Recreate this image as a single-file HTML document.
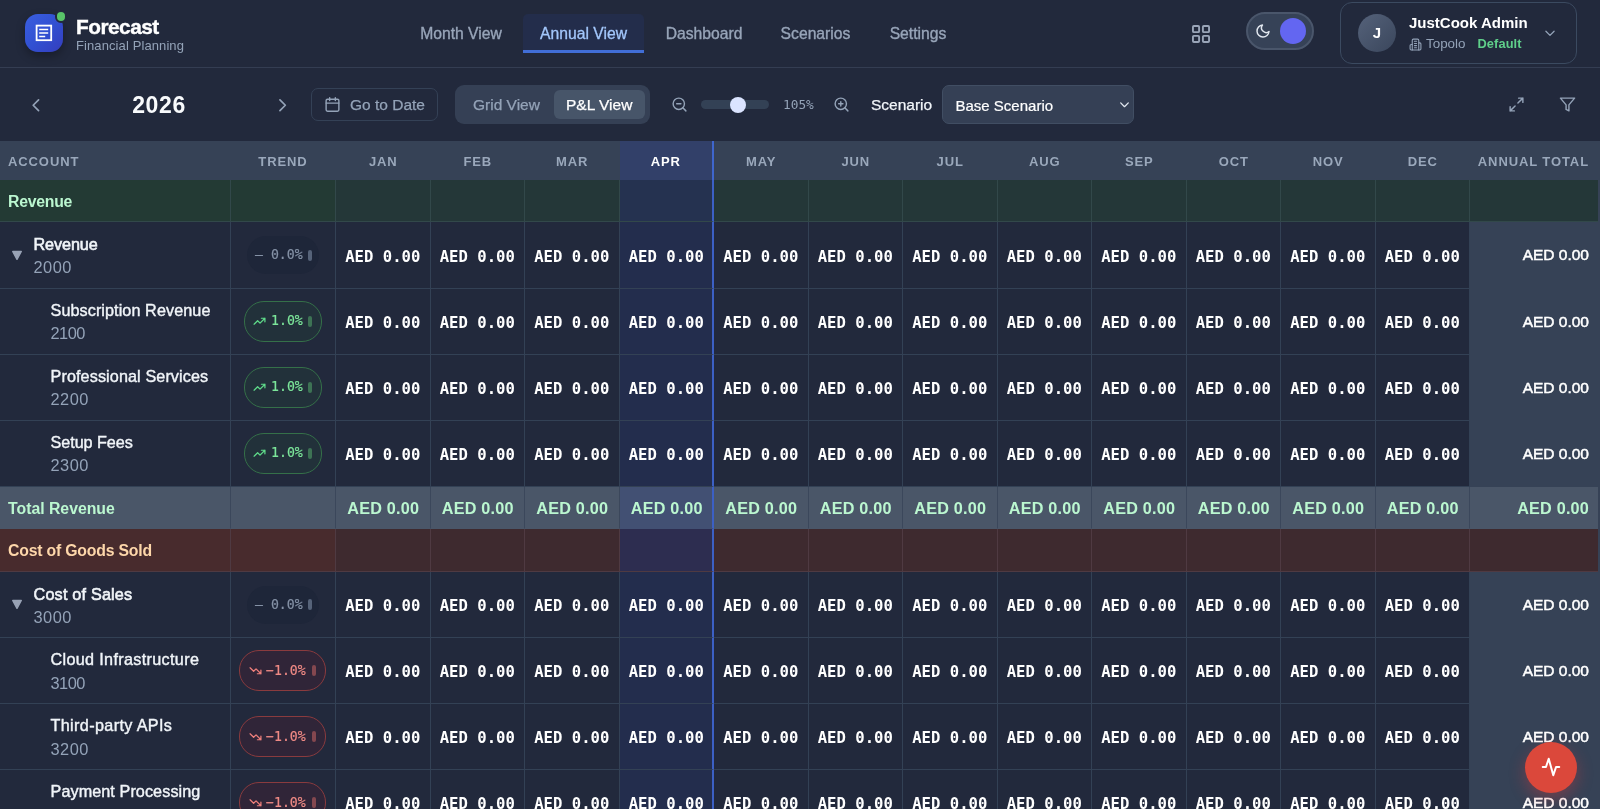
<!DOCTYPE html><html lang="en"><head><meta charset="utf-8"><title>Forecast - Annual View</title><style>
*{box-sizing:border-box;margin:0;padding:0}
html,body{width:1600px;height:809px;overflow:hidden;background:#22293c}
body{font-family:"Liberation Sans",sans-serif;color:#f1f5f9;position:relative}
#app{position:absolute;left:0;top:0;width:1600px;height:809px;overflow:hidden;will-change:transform}
.abs{position:absolute}
.hdr{position:absolute;left:0;top:0;width:1600px;height:68px;background:#22293c;border-bottom:1px solid #343d52}
.logo{position:absolute;left:25px;top:14px;width:38px;height:38px;border-radius:13px;background:linear-gradient(135deg,#3a5fe0 0%,#3150d2 50%,#353dbd 100%);box-shadow:0 4px 10px rgba(0,0,0,.3)}
.dot{position:absolute;left:54.5px;top:10px;width:12.5px;height:12.5px;border-radius:50%;background:#58c468;border:2px solid #22293c}
.brand{position:absolute;left:76px;top:15px;font-size:20.8px;font-weight:700;letter-spacing:-.5px;-webkit-text-stroke:.4px #fff;color:#fff;line-height:24px}
.sub{position:absolute;left:76px;top:38px;font-size:13px;color:#94a3b8;line-height:16px;letter-spacing:.1px}
.nav{position:absolute;top:14px;height:38px;line-height:40px;font-size:15.7px;color:#98a5b9;-webkit-text-stroke:.35px #98a5b9;text-align:center;white-space:nowrap}
.nav.act{color:#a3c7fb;-webkit-text-stroke:.3px #a3c7fb;background:#232d4b;border-bottom:3px solid #416ed7;border-radius:5px 5px 0 0;height:39px}
.tog{position:absolute;left:1246px;top:12px;width:68px;height:38px;border-radius:19px;background:#364257;border:2px solid #4a566b}
.knob{position:absolute;left:1280px;top:18px;width:26px;height:26px;border-radius:50%;background:#6366f1}
.user{position:absolute;left:1340px;top:2px;width:237px;height:62px;border-radius:12px;border:1px solid #3b4a60;background:#22293c}
.av{position:absolute;left:1358px;top:14px;width:38px;height:38px;border-radius:50%;background:linear-gradient(135deg,#55627a,#3a465c);color:#fff;font-weight:700;font-size:15px;text-align:center;line-height:38px}
.uname{position:absolute;left:1409px;top:14px;font-size:15px;font-weight:700;color:#fff;line-height:18px;white-space:nowrap}
.uorg{position:absolute;left:1426px;top:36px;font-size:13.4px;color:#94a3b8;line-height:16px}
.udef{position:absolute;left:1477.5px;top:36px;font-size:12.8px;letter-spacing:.1px;color:#5fcf8a;line-height:16px;font-weight:700}
.tb{position:absolute;left:0;top:69px;width:1600px;height:72px;background:#22293c}
.year{position:absolute;left:109px;top:90px;width:100px;text-align:center;font-size:23px;letter-spacing:.6px;font-weight:700;color:#f8fafc;line-height:30px}
.gobtn{position:absolute;left:311px;top:88px;width:127px;height:33px;border:1px solid #344156;border-radius:7px}
.gotxt{position:absolute;left:350px;top:95px;font-size:15.5px;-webkit-text-stroke:.25px #94a3b8;color:#94a3b8;line-height:20px;white-space:nowrap}
.seg{position:absolute;left:455px;top:85px;width:195px;height:39px;border-radius:9px;background:#354055}
.segact{position:absolute;left:554px;top:90px;width:91px;height:29px;border-radius:6px;background:#475569}
.seg1{position:absolute;left:473px;top:95px;font-size:15.5px;-webkit-text-stroke:.25px #94a3b8;color:#94a3b8;line-height:20px;white-space:nowrap}
.seg2{position:absolute;left:566px;top:95px;font-size:15.5px;-webkit-text-stroke:.25px #fff;color:#fff;line-height:20px;white-space:nowrap}
.track{position:absolute;left:701px;top:100px;width:68px;height:9px;border-radius:5px;background:#334155}
.thumb{position:absolute;left:729.5px;top:96.5px;width:16px;height:16px;border-radius:50%;background:#dbe4ff}
.zpct{position:absolute;left:783px;top:97px;font-family:"DejaVu Sans Mono","Liberation Mono",monospace;font-size:12.8px;color:#94a3b8;line-height:16px}
.scl{position:absolute;left:871px;top:94.5px;-webkit-text-stroke:.25px #f1f5f9;font-size:15.5px;color:#f1f5f9;line-height:20px}
.sel{position:absolute;left:942px;top:85px;width:192px;height:39px;border:1px solid #414e63;border-radius:7px;background:#354055}
.seltxt{position:absolute;left:955.5px;top:95.5px;font-size:15px;-webkit-text-stroke:.2px #fff;color:#fff;line-height:20px;white-space:nowrap}
.th{position:absolute;top:141px;height:39px;background:#364256;color:#9aa8bb;font-size:13px;font-weight:700;letter-spacing:.9px;line-height:41px;text-align:center;white-space:nowrap}
.cell{position:absolute;border-right:1px solid #334155;border-bottom:1px solid #334155}
.num{position:absolute;font-family:"DejaVu Sans Mono","Liberation Mono",monospace;font-weight:700;font-size:15.6px;line-height:20px;color:#fff;text-align:center;white-space:nowrap}
.tot{position:absolute;font-size:15.5px;line-height:20px;color:#fff;text-align:right;padding-right:11px;white-space:nowrap;-webkit-text-stroke:.5px #fff}
.tv{position:absolute;font-size:16.2px;letter-spacing:.2px;font-weight:700;line-height:20px;white-space:nowrap}
.sname{position:absolute;left:8px;font-size:15.8px;font-weight:700;line-height:20px;white-space:nowrap}
.pt{position:absolute;font-family:"DejaVu Sans Mono","Liberation Mono",monospace;font-size:13.2px;line-height:16px;white-space:nowrap;-webkit-text-stroke-width:.2px}
.aname{position:absolute;font-size:16.2px;color:#f1f5f9;line-height:20px;white-space:nowrap;-webkit-text-stroke:.3px #f1f5f9}
.acode{position:absolute;font-size:16.4px;letter-spacing:.5px;color:#94a3b8;line-height:20px}
.pill{position:absolute;border-radius:20px;font-family:"Liberation Mono",monospace;font-size:12.5px;white-space:nowrap}
.fab{position:absolute;left:1525px;top:742px;width:52px;height:51px;border-radius:50%;background:#db483b;box-shadow:0 6px 16px rgba(229,57,58,.35)}
</style></head><body><div id="app">
<div class="hdr"></div>
<div class="logo"></div><div class="dot"></div>
<svg class="abs" style="left:34px;top:23px" width="20" height="20" viewBox="0 0 20 20" fill="none" stroke="#fff"><rect x="2.6" y="2.6" width="14.6" height="14.6" stroke-width="1.800"/><path d="M5.200 6.500h9M5.200 10h9M5.200 13.600h6" stroke-width="1.500"/></svg>
<div class="brand">Forecast</div><div class="sub">Financial Planning</div>
<div class="nav" style="left:400px;width:122px">Month View</div>
<div class="nav act" style="left:523px;width:121px">Annual View</div>
<div class="nav" style="left:646px;width:116px">Dashboard</div>
<div class="nav" style="left:762px;width:107px">Scenarios</div>
<div class="nav" style="left:870px;width:96px">Settings</div>
<svg class="abs" style="left:1192px;top:24.500px" width="18" height="18" viewBox="0 0 19 19" fill="none" stroke="#9aa5b8" stroke-width="2"><rect x="1" y="1" width="6.5" height="6.5" rx="1"/><rect x="11.5" y="1" width="6.5" height="6.5" rx="1"/><rect x="1" y="11.5" width="6.5" height="6.5" rx="1"/><rect x="11.5" y="11.5" width="6.5" height="6.5" rx="1"/></svg>
<div class="tog"></div><div class="knob"></div>
<svg class="abs" style="left:1255px;top:23px" width="16" height="16" viewBox="0 0 24 24" fill="none" stroke="#e2e8f0" stroke-width="2.2" stroke-linecap="round" stroke-linejoin="round"><path d="M21 12.8A9 9 0 1 1 11.2 3a7 7 0 0 0 9.8 9.8z"/></svg>
<div class="user"></div><div class="av">J</div><div class="uname">JustCook Admin</div>
<svg class="abs" style="left:1409px;top:38px" width="13" height="13" viewBox="0 0 24 24" fill="none" stroke="#94a3b8" stroke-width="2" stroke-linecap="round" stroke-linejoin="round"><path d="M6 22V4a2 2 0 0 1 2-2h8a2 2 0 0 1 2 2v18z"/><path d="M6 12H4a2 2 0 0 0-2 2v6a2 2 0 0 0 2 2h2"/><path d="M18 9h2a2 2 0 0 1 2 2v9a2 2 0 0 1-2 2h-2"/><path d="M10 6h4M10 10h4M10 14h4M10 18h4"/></svg>
<div class="uorg">Topolo</div><div class="udef">Default</div>
<svg class="abs" style="left:1543px;top:25.500px" width="14" height="14" viewBox="0 0 24 24" fill="none" stroke="#94a3b8" stroke-width="2.2" stroke-linecap="round" stroke-linejoin="round"><path d="M5 9l7 7 7-7"/></svg>
<div class="tb"></div>
<svg class="abs" style="left:26.500px;top:95.500px" width="18.500" height="18.500" viewBox="0 0 24 24" fill="none" stroke="#94a3b8" stroke-width="2.2" stroke-linecap="round" stroke-linejoin="round"><path d="M15 5l-7 7 7 7"/></svg>
<div class="year">2026</div>
<svg class="abs" style="left:273px;top:95.700px" width="18.500" height="18.500" viewBox="0 0 24 24" fill="none" stroke="#94a3b8" stroke-width="2.2" stroke-linecap="round" stroke-linejoin="round"><path d="M9 5l7 7-7 7"/></svg>
<div class="gobtn"></div>
<svg class="abs" style="left:324.250px;top:96.250px" width="17" height="17" viewBox="0 0 24 24" fill="none" stroke="#94a3b8" stroke-width="2" stroke-linecap="round" stroke-linejoin="round"><rect x="3" y="4.5" width="18" height="17" rx="2"/><path d="M8 2.5v4M16 2.5v4M3 10h18"/></svg>
<div class="gotxt">Go to Date</div>
<div class="seg"></div><div class="segact"></div><div class="seg1">Grid View</div><div class="seg2">P&amp;L View</div>
<svg class="abs" style="left:671px;top:96px" width="17" height="17" viewBox="0 0 24 24" fill="none" stroke="#94a3b8" stroke-width="2" stroke-linecap="round" stroke-linejoin="round"><circle cx="11" cy="11" r="8"/><path d="M21 21l-4.3-4.3M8 11h6"/></svg>
<div class="track"></div><div class="thumb"></div><div class="zpct">105%</div>
<svg class="abs" style="left:833px;top:96px" width="17" height="17" viewBox="0 0 24 24" fill="none" stroke="#94a3b8" stroke-width="2" stroke-linecap="round" stroke-linejoin="round"><circle cx="11" cy="11" r="8"/><path d="M21 21l-4.3-4.3M8 11h6M11 8v6"/></svg>
<div class="scl">Scenario</div><div class="sel"></div><div class="seltxt">Base Scenario</div>
<svg class="abs" style="left:1118px;top:98px" width="13" height="13" viewBox="0 0 24 24" fill="none" stroke="#e2e8f0" stroke-width="2.4" stroke-linecap="round" stroke-linejoin="round"><path d="M5 9l7 7 7-7"/></svg>
<svg class="abs" style="left:1508px;top:96px" width="17" height="17" viewBox="0 0 24 24" fill="none" stroke="#94a3b8" stroke-width="2" stroke-linecap="round" stroke-linejoin="round"><path d="M15 3h6v6M21 3l-7 7M9 21H3v-6M3 21l7-7"/></svg>
<svg class="abs" style="left:1559px;top:96px" width="17" height="17" viewBox="0 0 24 24" fill="none" stroke="#94a3b8" stroke-width="2" stroke-linecap="round" stroke-linejoin="round"><path d="M22 3H2l8 9.5V19l4 2v-8.500z"/></svg>
<div class="th" style="left:0;width:1600px"></div>
<div class="th" style="left:0;width:230px;text-align:left;padding-left:8px">ACCOUNT</div>
<div class="th" style="left:230px;width:106px">TREND</div>
<div class="th" style="left:336px;width:94.5px">JAN</div>
<div class="th" style="left:430.5px;width:94.5px">FEB</div>
<div class="th" style="left:525px;width:94.5px">MAR</div>
<div class="th" style="left:619.5px;width:94.5px;background:#324069;color:#fff;border-right:2px solid #3f66cc">APR</div>
<div class="th" style="left:714px;width:94.5px">MAY</div>
<div class="th" style="left:808.5px;width:94.5px">JUN</div>
<div class="th" style="left:903px;width:94.5px">JUL</div>
<div class="th" style="left:997.5px;width:94.5px">AUG</div>
<div class="th" style="left:1092px;width:94.5px">SEP</div>
<div class="th" style="left:1186.5px;width:94.5px">OCT</div>
<div class="th" style="left:1281px;width:94.5px">NOV</div>
<div class="th" style="left:1375.5px;width:94.5px">DEC</div>
<div class="th" style="left:1470px;width:130px;text-align:right;padding-right:11px">ANNUAL TOTAL</div>
<div class="cell" style="left:0px;top:180px;width:230.5px;height:42px;background:#233a34;border-color:#32484a;border-bottom-color:#32484a"></div>
<div class="cell" style="left:230.5px;top:180px;width:105.5px;height:42px;background:#233a34;border-color:#32484a;border-bottom-color:#32484a"></div>
<div class="cell" style="left:336px;top:180px;width:94.5px;height:42px;background:#243738;border-color:#32484a;border-bottom-color:#32484a"></div>
<div class="cell" style="left:430.5px;top:180px;width:94.5px;height:42px;background:#243738;border-color:#32484a;border-bottom-color:#32484a"></div>
<div class="cell" style="left:525px;top:180px;width:94.5px;height:42px;background:#243738;border-color:#32484a;border-bottom-color:#32484a"></div>
<div class="cell" style="left:619.5px;top:180px;width:94.5px;height:42px;background:#253250;border-color:#32484a;border-bottom-color:#32484a;border-right:2px solid #3c60c4"></div>
<div class="cell" style="left:714px;top:180px;width:94.5px;height:42px;background:#243738;border-color:#32484a;border-bottom-color:#32484a"></div>
<div class="cell" style="left:808.5px;top:180px;width:94.5px;height:42px;background:#243738;border-color:#32484a;border-bottom-color:#32484a"></div>
<div class="cell" style="left:903px;top:180px;width:94.5px;height:42px;background:#243738;border-color:#32484a;border-bottom-color:#32484a"></div>
<div class="cell" style="left:997.5px;top:180px;width:94.5px;height:42px;background:#243738;border-color:#32484a;border-bottom-color:#32484a"></div>
<div class="cell" style="left:1092px;top:180px;width:94.5px;height:42px;background:#243738;border-color:#32484a;border-bottom-color:#32484a"></div>
<div class="cell" style="left:1186.5px;top:180px;width:94.5px;height:42px;background:#243738;border-color:#32484a;border-bottom-color:#32484a"></div>
<div class="cell" style="left:1281px;top:180px;width:94.5px;height:42px;background:#243738;border-color:#32484a;border-bottom-color:#32484a"></div>
<div class="cell" style="left:1375.5px;top:180px;width:94.5px;height:42px;background:#243738;border-color:#32484a;border-bottom-color:#32484a"></div>
<div class="cell" style="left:1470px;top:180px;width:130px;height:42px;background:#243738;border-color:#32484a;border-bottom-color:#32484a;border-right:0"></div>
<div class="sname" style="top:191.6px;color:#bbf7d0;letter-spacing:-0.25px">Revenue</div>
<div class="cell" style="left:0px;top:222px;width:230.5px;height:67px"></div>
<div class="cell" style="left:230.5px;top:222px;width:105.5px;height:67px"></div>
<div class="cell" style="left:336px;top:222px;width:94.5px;height:67px"></div>
<div class="num" style="left:335.5px;top:246.55px;width:94.5px">AED 0.00</div>
<div class="cell" style="left:430.5px;top:222px;width:94.5px;height:67px"></div>
<div class="num" style="left:430px;top:246.55px;width:94.5px">AED 0.00</div>
<div class="cell" style="left:525px;top:222px;width:94.5px;height:67px"></div>
<div class="num" style="left:524.5px;top:246.55px;width:94.5px">AED 0.00</div>
<div class="cell" style="left:619.5px;top:222px;width:94.5px;height:67px;background:#232d4d;border-right:2px solid #3c60c4"></div>
<div class="num" style="left:619px;top:246.55px;width:94.5px">AED 0.00</div>
<div class="cell" style="left:714px;top:222px;width:94.5px;height:67px"></div>
<div class="num" style="left:713.5px;top:246.55px;width:94.5px">AED 0.00</div>
<div class="cell" style="left:808.5px;top:222px;width:94.5px;height:67px"></div>
<div class="num" style="left:808px;top:246.55px;width:94.5px">AED 0.00</div>
<div class="cell" style="left:903px;top:222px;width:94.5px;height:67px"></div>
<div class="num" style="left:902.5px;top:246.55px;width:94.5px">AED 0.00</div>
<div class="cell" style="left:997.5px;top:222px;width:94.5px;height:67px"></div>
<div class="num" style="left:997px;top:246.55px;width:94.5px">AED 0.00</div>
<div class="cell" style="left:1092px;top:222px;width:94.5px;height:67px"></div>
<div class="num" style="left:1091.5px;top:246.55px;width:94.5px">AED 0.00</div>
<div class="cell" style="left:1186.5px;top:222px;width:94.5px;height:67px"></div>
<div class="num" style="left:1186px;top:246.55px;width:94.5px">AED 0.00</div>
<div class="cell" style="left:1281px;top:222px;width:94.5px;height:67px"></div>
<div class="num" style="left:1280.5px;top:246.55px;width:94.5px">AED 0.00</div>
<div class="cell" style="left:1375.5px;top:222px;width:94.5px;height:67px"></div>
<div class="num" style="left:1375px;top:246.55px;width:94.5px">AED 0.00</div>
<div class="cell" style="left:1470px;top:222px;width:130px;height:67px;background:#364256;border:0"></div>
<div class="tot" style="left:1470px;top:245.35px;width:130px">AED 0.00</div>
<div class="aname" style="left:33.5px;top:233.95px;letter-spacing:-0.1px;-webkit-text-stroke-width:.6px">Revenue</div>
<div class="acode" style="left:33.5px;top:257.25px;letter-spacing:0.5px">2000</div>
<svg class="abs" style="left:11px;top:249.85px" width="12" height="11" viewBox="0 0 12 11"><path d="M1.700 1.500h8.600L6 9.300z" fill="#98a2b5" stroke="#98a2b5" stroke-width="1.400" stroke-linejoin="round"/></svg>
<div class="pill" style="left:247px;top:236.05px;width:72px;height:38px;background:#1e2639"></div>
<div class="pt" style="left:255px;top:247.05px;-webkit-text-stroke-color:#8592a6;color:#8592a6">&#8211; 0.0%</div>
<div class="abs" style="left:308px;top:249.55px;width:3.5px;height:11px;border-radius:2px;background:#566379"></div>
<div class="cell" style="left:0px;top:289px;width:230.5px;height:66px"></div>
<div class="cell" style="left:230.5px;top:289px;width:105.5px;height:66px"></div>
<div class="cell" style="left:336px;top:289px;width:94.5px;height:66px"></div>
<div class="num" style="left:335.5px;top:312.7px;width:94.5px">AED 0.00</div>
<div class="cell" style="left:430.5px;top:289px;width:94.5px;height:66px"></div>
<div class="num" style="left:430px;top:312.7px;width:94.5px">AED 0.00</div>
<div class="cell" style="left:525px;top:289px;width:94.5px;height:66px"></div>
<div class="num" style="left:524.5px;top:312.7px;width:94.5px">AED 0.00</div>
<div class="cell" style="left:619.5px;top:289px;width:94.5px;height:66px;background:#232d4d;border-right:2px solid #3c60c4"></div>
<div class="num" style="left:619px;top:312.7px;width:94.5px">AED 0.00</div>
<div class="cell" style="left:714px;top:289px;width:94.5px;height:66px"></div>
<div class="num" style="left:713.5px;top:312.7px;width:94.5px">AED 0.00</div>
<div class="cell" style="left:808.5px;top:289px;width:94.5px;height:66px"></div>
<div class="num" style="left:808px;top:312.7px;width:94.5px">AED 0.00</div>
<div class="cell" style="left:903px;top:289px;width:94.5px;height:66px"></div>
<div class="num" style="left:902.5px;top:312.7px;width:94.5px">AED 0.00</div>
<div class="cell" style="left:997.5px;top:289px;width:94.5px;height:66px"></div>
<div class="num" style="left:997px;top:312.7px;width:94.5px">AED 0.00</div>
<div class="cell" style="left:1092px;top:289px;width:94.5px;height:66px"></div>
<div class="num" style="left:1091.5px;top:312.7px;width:94.5px">AED 0.00</div>
<div class="cell" style="left:1186.5px;top:289px;width:94.5px;height:66px"></div>
<div class="num" style="left:1186px;top:312.7px;width:94.5px">AED 0.00</div>
<div class="cell" style="left:1281px;top:289px;width:94.5px;height:66px"></div>
<div class="num" style="left:1280.5px;top:312.7px;width:94.5px">AED 0.00</div>
<div class="cell" style="left:1375.5px;top:289px;width:94.5px;height:66px"></div>
<div class="num" style="left:1375px;top:312.7px;width:94.5px">AED 0.00</div>
<div class="cell" style="left:1470px;top:289px;width:130px;height:66px;background:#364256;border:0"></div>
<div class="tot" style="left:1470px;top:311.5px;width:130px">AED 0.00</div>
<div class="aname" style="left:50.5px;top:300.1px;letter-spacing:0.08px;-webkit-text-stroke-width:.4px">Subscription Revenue</div>
<div class="acode" style="left:50.5px;top:323.4px;letter-spacing:-0.5px">2100</div>
<div class="pill" style="left:243.500px;top:301.2px;width:78px;height:41px;background:#22313a;border:1px solid #357049"></div>
<svg class="abs" style="left:253px;top:315.7px" width="13" height="11" viewBox="0 0 24 20" fill="none" stroke="#5fdc8a" stroke-width="2.3" stroke-linecap="round" stroke-linejoin="round"><path d="M2 15l6.500-6.500 4.500 4.500L22 4M15.500 4H22v6.500"/></svg>
<div class="pt" style="left:271px;top:313.2px;-webkit-text-stroke-color:#7ce69a;color:#7ce69a">1.0%</div>
<div class="abs" style="left:308px;top:315.7px;width:3.5px;height:11px;border-radius:2px;background:#3d7354"></div>
<div class="cell" style="left:0px;top:355px;width:230.5px;height:66px"></div>
<div class="cell" style="left:230.5px;top:355px;width:105.5px;height:66px"></div>
<div class="cell" style="left:336px;top:355px;width:94.5px;height:66px"></div>
<div class="num" style="left:335.5px;top:378.7px;width:94.5px">AED 0.00</div>
<div class="cell" style="left:430.5px;top:355px;width:94.5px;height:66px"></div>
<div class="num" style="left:430px;top:378.7px;width:94.5px">AED 0.00</div>
<div class="cell" style="left:525px;top:355px;width:94.5px;height:66px"></div>
<div class="num" style="left:524.5px;top:378.7px;width:94.5px">AED 0.00</div>
<div class="cell" style="left:619.5px;top:355px;width:94.5px;height:66px;background:#232d4d;border-right:2px solid #3c60c4"></div>
<div class="num" style="left:619px;top:378.7px;width:94.5px">AED 0.00</div>
<div class="cell" style="left:714px;top:355px;width:94.5px;height:66px"></div>
<div class="num" style="left:713.5px;top:378.7px;width:94.5px">AED 0.00</div>
<div class="cell" style="left:808.5px;top:355px;width:94.5px;height:66px"></div>
<div class="num" style="left:808px;top:378.7px;width:94.5px">AED 0.00</div>
<div class="cell" style="left:903px;top:355px;width:94.5px;height:66px"></div>
<div class="num" style="left:902.5px;top:378.7px;width:94.5px">AED 0.00</div>
<div class="cell" style="left:997.5px;top:355px;width:94.5px;height:66px"></div>
<div class="num" style="left:997px;top:378.7px;width:94.5px">AED 0.00</div>
<div class="cell" style="left:1092px;top:355px;width:94.5px;height:66px"></div>
<div class="num" style="left:1091.5px;top:378.7px;width:94.5px">AED 0.00</div>
<div class="cell" style="left:1186.5px;top:355px;width:94.5px;height:66px"></div>
<div class="num" style="left:1186px;top:378.7px;width:94.5px">AED 0.00</div>
<div class="cell" style="left:1281px;top:355px;width:94.5px;height:66px"></div>
<div class="num" style="left:1280.5px;top:378.7px;width:94.5px">AED 0.00</div>
<div class="cell" style="left:1375.5px;top:355px;width:94.5px;height:66px"></div>
<div class="num" style="left:1375px;top:378.7px;width:94.5px">AED 0.00</div>
<div class="cell" style="left:1470px;top:355px;width:130px;height:66px;background:#364256;border:0"></div>
<div class="tot" style="left:1470px;top:377.5px;width:130px">AED 0.00</div>
<div class="aname" style="left:50.5px;top:366.1px;letter-spacing:0.1px;-webkit-text-stroke-width:.4px">Professional Services</div>
<div class="acode" style="left:50.5px;top:389.4px;letter-spacing:0.5px">2200</div>
<div class="pill" style="left:243.500px;top:367.2px;width:78px;height:41px;background:#22313a;border:1px solid #357049"></div>
<svg class="abs" style="left:253px;top:381.7px" width="13" height="11" viewBox="0 0 24 20" fill="none" stroke="#5fdc8a" stroke-width="2.3" stroke-linecap="round" stroke-linejoin="round"><path d="M2 15l6.500-6.500 4.500 4.500L22 4M15.500 4H22v6.500"/></svg>
<div class="pt" style="left:271px;top:379.2px;-webkit-text-stroke-color:#7ce69a;color:#7ce69a">1.0%</div>
<div class="abs" style="left:308px;top:381.7px;width:3.5px;height:11px;border-radius:2px;background:#3d7354"></div>
<div class="cell" style="left:0px;top:421px;width:230.5px;height:66px"></div>
<div class="cell" style="left:230.5px;top:421px;width:105.5px;height:66px"></div>
<div class="cell" style="left:336px;top:421px;width:94.5px;height:66px"></div>
<div class="num" style="left:335.5px;top:444.7px;width:94.5px">AED 0.00</div>
<div class="cell" style="left:430.5px;top:421px;width:94.5px;height:66px"></div>
<div class="num" style="left:430px;top:444.7px;width:94.5px">AED 0.00</div>
<div class="cell" style="left:525px;top:421px;width:94.5px;height:66px"></div>
<div class="num" style="left:524.5px;top:444.7px;width:94.5px">AED 0.00</div>
<div class="cell" style="left:619.5px;top:421px;width:94.5px;height:66px;background:#232d4d;border-right:2px solid #3c60c4"></div>
<div class="num" style="left:619px;top:444.7px;width:94.5px">AED 0.00</div>
<div class="cell" style="left:714px;top:421px;width:94.5px;height:66px"></div>
<div class="num" style="left:713.5px;top:444.7px;width:94.5px">AED 0.00</div>
<div class="cell" style="left:808.5px;top:421px;width:94.5px;height:66px"></div>
<div class="num" style="left:808px;top:444.7px;width:94.5px">AED 0.00</div>
<div class="cell" style="left:903px;top:421px;width:94.5px;height:66px"></div>
<div class="num" style="left:902.5px;top:444.7px;width:94.5px">AED 0.00</div>
<div class="cell" style="left:997.5px;top:421px;width:94.5px;height:66px"></div>
<div class="num" style="left:997px;top:444.7px;width:94.5px">AED 0.00</div>
<div class="cell" style="left:1092px;top:421px;width:94.5px;height:66px"></div>
<div class="num" style="left:1091.5px;top:444.7px;width:94.5px">AED 0.00</div>
<div class="cell" style="left:1186.5px;top:421px;width:94.5px;height:66px"></div>
<div class="num" style="left:1186px;top:444.7px;width:94.5px">AED 0.00</div>
<div class="cell" style="left:1281px;top:421px;width:94.5px;height:66px"></div>
<div class="num" style="left:1280.5px;top:444.7px;width:94.5px">AED 0.00</div>
<div class="cell" style="left:1375.5px;top:421px;width:94.5px;height:66px"></div>
<div class="num" style="left:1375px;top:444.7px;width:94.5px">AED 0.00</div>
<div class="cell" style="left:1470px;top:421px;width:130px;height:66px;background:#364256;border:0"></div>
<div class="tot" style="left:1470px;top:443.5px;width:130px">AED 0.00</div>
<div class="aname" style="left:50.5px;top:432.1px;letter-spacing:-0.05px;-webkit-text-stroke-width:.4px">Setup Fees</div>
<div class="acode" style="left:50.5px;top:455.4px;letter-spacing:0.5px">2300</div>
<div class="pill" style="left:243.500px;top:433.2px;width:78px;height:41px;background:#22313a;border:1px solid #357049"></div>
<svg class="abs" style="left:253px;top:447.7px" width="13" height="11" viewBox="0 0 24 20" fill="none" stroke="#5fdc8a" stroke-width="2.3" stroke-linecap="round" stroke-linejoin="round"><path d="M2 15l6.500-6.500 4.500 4.500L22 4M15.500 4H22v6.500"/></svg>
<div class="pt" style="left:271px;top:445.2px;-webkit-text-stroke-color:#7ce69a;color:#7ce69a">1.0%</div>
<div class="abs" style="left:308px;top:447.7px;width:3.5px;height:11px;border-radius:2px;background:#3d7354"></div>
<div class="cell" style="left:0px;top:487px;width:230.5px;height:42px;background:#4a5668;border-color:#3b475b;border-bottom-color:#4a5668"></div>
<div class="cell" style="left:230.5px;top:487px;width:105.5px;height:42px;background:#4a5668;border-color:#3b475b;border-bottom-color:#4a5668"></div>
<div class="cell" style="left:336px;top:487px;width:94.5px;height:42px;background:#4a5668;border-color:#3b475b;border-bottom-color:#4a5668"></div>
<div class="tv" style="left:336px;top:498.3px;width:94.5px;color:#bbf7d0;text-align:center">AED 0.00</div>
<div class="cell" style="left:430.5px;top:487px;width:94.5px;height:42px;background:#4a5668;border-color:#3b475b;border-bottom-color:#4a5668"></div>
<div class="tv" style="left:430.5px;top:498.3px;width:94.5px;color:#bbf7d0;text-align:center">AED 0.00</div>
<div class="cell" style="left:525px;top:487px;width:94.5px;height:42px;background:#4a5668;border-color:#3b475b;border-bottom-color:#4a5668"></div>
<div class="tv" style="left:525px;top:498.3px;width:94.5px;color:#bbf7d0;text-align:center">AED 0.00</div>
<div class="cell" style="left:619.5px;top:487px;width:94.5px;height:42px;background:#425073;border-color:#3b475b;border-bottom-color:#425073;border-right:2px solid #3c60c4"></div>
<div class="tv" style="left:619.5px;top:498.3px;width:94.5px;color:#bbf7d0;text-align:center">AED 0.00</div>
<div class="cell" style="left:714px;top:487px;width:94.5px;height:42px;background:#4a5668;border-color:#3b475b;border-bottom-color:#4a5668"></div>
<div class="tv" style="left:714px;top:498.3px;width:94.5px;color:#bbf7d0;text-align:center">AED 0.00</div>
<div class="cell" style="left:808.5px;top:487px;width:94.5px;height:42px;background:#4a5668;border-color:#3b475b;border-bottom-color:#4a5668"></div>
<div class="tv" style="left:808.5px;top:498.3px;width:94.5px;color:#bbf7d0;text-align:center">AED 0.00</div>
<div class="cell" style="left:903px;top:487px;width:94.5px;height:42px;background:#4a5668;border-color:#3b475b;border-bottom-color:#4a5668"></div>
<div class="tv" style="left:903px;top:498.3px;width:94.5px;color:#bbf7d0;text-align:center">AED 0.00</div>
<div class="cell" style="left:997.5px;top:487px;width:94.5px;height:42px;background:#4a5668;border-color:#3b475b;border-bottom-color:#4a5668"></div>
<div class="tv" style="left:997.5px;top:498.3px;width:94.5px;color:#bbf7d0;text-align:center">AED 0.00</div>
<div class="cell" style="left:1092px;top:487px;width:94.5px;height:42px;background:#4a5668;border-color:#3b475b;border-bottom-color:#4a5668"></div>
<div class="tv" style="left:1092px;top:498.3px;width:94.5px;color:#bbf7d0;text-align:center">AED 0.00</div>
<div class="cell" style="left:1186.5px;top:487px;width:94.5px;height:42px;background:#4a5668;border-color:#3b475b;border-bottom-color:#4a5668"></div>
<div class="tv" style="left:1186.5px;top:498.3px;width:94.5px;color:#bbf7d0;text-align:center">AED 0.00</div>
<div class="cell" style="left:1281px;top:487px;width:94.5px;height:42px;background:#4a5668;border-color:#3b475b;border-bottom-color:#4a5668"></div>
<div class="tv" style="left:1281px;top:498.3px;width:94.5px;color:#bbf7d0;text-align:center">AED 0.00</div>
<div class="cell" style="left:1375.5px;top:487px;width:94.5px;height:42px;background:#4a5668;border-color:#3b475b;border-bottom-color:#4a5668"></div>
<div class="tv" style="left:1375.5px;top:498.3px;width:94.5px;color:#bbf7d0;text-align:center">AED 0.00</div>
<div class="cell" style="left:1470px;top:487px;width:130px;height:42px;background:#4a5668;border-color:#3b475b;border-bottom-color:#4a5668;border-right:0"></div>
<div class="tv" style="left:1470px;top:498.3px;width:130px;color:#bbf7d0;text-align:right;padding-right:11px">AED 0.00</div>
<div class="sname" style="top:499px;color:#bbf7d0;letter-spacing:0px">Total Revenue</div>
<div class="cell" style="left:0px;top:529px;width:230.5px;height:43px;background:#482b2d;border-color:#4f3a42;border-bottom-color:#4f3a42"></div>
<div class="cell" style="left:230.5px;top:529px;width:105.5px;height:43px;background:#482b2d;border-color:#4f3a42;border-bottom-color:#4f3a42"></div>
<div class="cell" style="left:336px;top:529px;width:94.5px;height:43px;background:#3e2a2f;border-color:#4f3a42;border-bottom-color:#4f3a42"></div>
<div class="cell" style="left:430.5px;top:529px;width:94.5px;height:43px;background:#3e2a2f;border-color:#4f3a42;border-bottom-color:#4f3a42"></div>
<div class="cell" style="left:525px;top:529px;width:94.5px;height:43px;background:#3e2a2f;border-color:#4f3a42;border-bottom-color:#4f3a42"></div>
<div class="cell" style="left:619.5px;top:529px;width:94.5px;height:43px;background:#2d2d50;border-color:#4f3a42;border-bottom-color:#4f3a42;border-right:2px solid #3c60c4"></div>
<div class="cell" style="left:714px;top:529px;width:94.5px;height:43px;background:#3e2a2f;border-color:#4f3a42;border-bottom-color:#4f3a42"></div>
<div class="cell" style="left:808.5px;top:529px;width:94.5px;height:43px;background:#3e2a2f;border-color:#4f3a42;border-bottom-color:#4f3a42"></div>
<div class="cell" style="left:903px;top:529px;width:94.5px;height:43px;background:#3e2a2f;border-color:#4f3a42;border-bottom-color:#4f3a42"></div>
<div class="cell" style="left:997.5px;top:529px;width:94.5px;height:43px;background:#3e2a2f;border-color:#4f3a42;border-bottom-color:#4f3a42"></div>
<div class="cell" style="left:1092px;top:529px;width:94.5px;height:43px;background:#3e2a2f;border-color:#4f3a42;border-bottom-color:#4f3a42"></div>
<div class="cell" style="left:1186.5px;top:529px;width:94.5px;height:43px;background:#3e2a2f;border-color:#4f3a42;border-bottom-color:#4f3a42"></div>
<div class="cell" style="left:1281px;top:529px;width:94.5px;height:43px;background:#3e2a2f;border-color:#4f3a42;border-bottom-color:#4f3a42"></div>
<div class="cell" style="left:1375.5px;top:529px;width:94.5px;height:43px;background:#3e2a2f;border-color:#4f3a42;border-bottom-color:#4f3a42"></div>
<div class="cell" style="left:1470px;top:529px;width:130px;height:43px;background:#3e2a2f;border-color:#4f3a42;border-bottom-color:#4f3a42;border-right:0"></div>
<div class="sname" style="top:540.8px;color:#fed7aa;letter-spacing:-0.2px">Cost of Goods Sold</div>
<div class="cell" style="left:0px;top:572px;width:230.5px;height:66px"></div>
<div class="cell" style="left:230.5px;top:572px;width:105.5px;height:66px"></div>
<div class="cell" style="left:336px;top:572px;width:94.5px;height:66px"></div>
<div class="num" style="left:335.5px;top:596.1px;width:94.5px">AED 0.00</div>
<div class="cell" style="left:430.5px;top:572px;width:94.5px;height:66px"></div>
<div class="num" style="left:430px;top:596.1px;width:94.5px">AED 0.00</div>
<div class="cell" style="left:525px;top:572px;width:94.5px;height:66px"></div>
<div class="num" style="left:524.5px;top:596.1px;width:94.5px">AED 0.00</div>
<div class="cell" style="left:619.5px;top:572px;width:94.5px;height:66px;background:#232d4d;border-right:2px solid #3c60c4"></div>
<div class="num" style="left:619px;top:596.1px;width:94.5px">AED 0.00</div>
<div class="cell" style="left:714px;top:572px;width:94.5px;height:66px"></div>
<div class="num" style="left:713.5px;top:596.1px;width:94.5px">AED 0.00</div>
<div class="cell" style="left:808.5px;top:572px;width:94.5px;height:66px"></div>
<div class="num" style="left:808px;top:596.1px;width:94.5px">AED 0.00</div>
<div class="cell" style="left:903px;top:572px;width:94.5px;height:66px"></div>
<div class="num" style="left:902.5px;top:596.1px;width:94.5px">AED 0.00</div>
<div class="cell" style="left:997.5px;top:572px;width:94.5px;height:66px"></div>
<div class="num" style="left:997px;top:596.1px;width:94.5px">AED 0.00</div>
<div class="cell" style="left:1092px;top:572px;width:94.5px;height:66px"></div>
<div class="num" style="left:1091.5px;top:596.1px;width:94.5px">AED 0.00</div>
<div class="cell" style="left:1186.5px;top:572px;width:94.5px;height:66px"></div>
<div class="num" style="left:1186px;top:596.1px;width:94.5px">AED 0.00</div>
<div class="cell" style="left:1281px;top:572px;width:94.5px;height:66px"></div>
<div class="num" style="left:1280.5px;top:596.1px;width:94.5px">AED 0.00</div>
<div class="cell" style="left:1375.5px;top:572px;width:94.5px;height:66px"></div>
<div class="num" style="left:1375px;top:596.1px;width:94.5px">AED 0.00</div>
<div class="cell" style="left:1470px;top:572px;width:130px;height:66px;background:#364256;border:0"></div>
<div class="tot" style="left:1470px;top:594.9px;width:130px">AED 0.00</div>
<div class="aname" style="left:33.5px;top:583.5px;letter-spacing:0.2px;-webkit-text-stroke-width:.6px">Cost of Sales</div>
<div class="acode" style="left:33.5px;top:606.8px;letter-spacing:0.5px">3000</div>
<svg class="abs" style="left:11px;top:599.4px" width="12" height="11" viewBox="0 0 12 11"><path d="M1.700 1.500h8.600L6 9.300z" fill="#98a2b5" stroke="#98a2b5" stroke-width="1.400" stroke-linejoin="round"/></svg>
<div class="pill" style="left:247px;top:585.6px;width:72px;height:38px;background:#1e2639"></div>
<div class="pt" style="left:255px;top:596.6px;-webkit-text-stroke-color:#8592a6;color:#8592a6">&#8211; 0.0%</div>
<div class="abs" style="left:308px;top:599.1px;width:3.5px;height:11px;border-radius:2px;background:#566379"></div>
<div class="cell" style="left:0px;top:638px;width:230.5px;height:66px"></div>
<div class="cell" style="left:230.5px;top:638px;width:105.5px;height:66px"></div>
<div class="cell" style="left:336px;top:638px;width:94.5px;height:66px"></div>
<div class="num" style="left:335.5px;top:662.05px;width:94.5px">AED 0.00</div>
<div class="cell" style="left:430.5px;top:638px;width:94.5px;height:66px"></div>
<div class="num" style="left:430px;top:662.05px;width:94.5px">AED 0.00</div>
<div class="cell" style="left:525px;top:638px;width:94.5px;height:66px"></div>
<div class="num" style="left:524.5px;top:662.05px;width:94.5px">AED 0.00</div>
<div class="cell" style="left:619.5px;top:638px;width:94.5px;height:66px;background:#232d4d;border-right:2px solid #3c60c4"></div>
<div class="num" style="left:619px;top:662.05px;width:94.5px">AED 0.00</div>
<div class="cell" style="left:714px;top:638px;width:94.5px;height:66px"></div>
<div class="num" style="left:713.5px;top:662.05px;width:94.5px">AED 0.00</div>
<div class="cell" style="left:808.5px;top:638px;width:94.5px;height:66px"></div>
<div class="num" style="left:808px;top:662.05px;width:94.5px">AED 0.00</div>
<div class="cell" style="left:903px;top:638px;width:94.5px;height:66px"></div>
<div class="num" style="left:902.5px;top:662.05px;width:94.5px">AED 0.00</div>
<div class="cell" style="left:997.5px;top:638px;width:94.5px;height:66px"></div>
<div class="num" style="left:997px;top:662.05px;width:94.5px">AED 0.00</div>
<div class="cell" style="left:1092px;top:638px;width:94.5px;height:66px"></div>
<div class="num" style="left:1091.5px;top:662.05px;width:94.5px">AED 0.00</div>
<div class="cell" style="left:1186.5px;top:638px;width:94.5px;height:66px"></div>
<div class="num" style="left:1186px;top:662.05px;width:94.5px">AED 0.00</div>
<div class="cell" style="left:1281px;top:638px;width:94.5px;height:66px"></div>
<div class="num" style="left:1280.5px;top:662.05px;width:94.5px">AED 0.00</div>
<div class="cell" style="left:1375.5px;top:638px;width:94.5px;height:66px"></div>
<div class="num" style="left:1375px;top:662.05px;width:94.5px">AED 0.00</div>
<div class="cell" style="left:1470px;top:638px;width:130px;height:66px;background:#364256;border:0"></div>
<div class="tot" style="left:1470px;top:660.85px;width:130px">AED 0.00</div>
<div class="aname" style="left:50.5px;top:649.45px;letter-spacing:0.33px;-webkit-text-stroke-width:.4px">Cloud Infrastructure</div>
<div class="acode" style="left:50.5px;top:672.75px;letter-spacing:-0.5px">3100</div>
<div class="pill" style="left:239px;top:649.55px;width:87px;height:41px;background:#302538;border:1px solid #8a3b3e"></div>
<svg class="abs" style="left:249px;top:665.05px" width="13" height="11" viewBox="0 0 24 20" fill="none" stroke="#f0807c" stroke-width="2.3" stroke-linecap="round" stroke-linejoin="round"><path d="M2 5l6.500 6.500 4.500-4.500L22 16M15.500 16H22V9.500"/></svg>
<div class="pt" style="left:266px;top:662.55px;-webkit-text-stroke-color:#ef8a85;color:#ef8a85">&#8722;1.0%</div>
<div class="abs" style="left:312px;top:665.05px;width:3.5px;height:11px;border-radius:2px;background:#84474f"></div>
<div class="cell" style="left:0px;top:704px;width:230.5px;height:66px"></div>
<div class="cell" style="left:230.5px;top:704px;width:105.5px;height:66px"></div>
<div class="cell" style="left:336px;top:704px;width:94.5px;height:66px"></div>
<div class="num" style="left:335.5px;top:728px;width:94.5px">AED 0.00</div>
<div class="cell" style="left:430.5px;top:704px;width:94.5px;height:66px"></div>
<div class="num" style="left:430px;top:728px;width:94.5px">AED 0.00</div>
<div class="cell" style="left:525px;top:704px;width:94.5px;height:66px"></div>
<div class="num" style="left:524.5px;top:728px;width:94.5px">AED 0.00</div>
<div class="cell" style="left:619.5px;top:704px;width:94.5px;height:66px;background:#232d4d;border-right:2px solid #3c60c4"></div>
<div class="num" style="left:619px;top:728px;width:94.5px">AED 0.00</div>
<div class="cell" style="left:714px;top:704px;width:94.5px;height:66px"></div>
<div class="num" style="left:713.5px;top:728px;width:94.5px">AED 0.00</div>
<div class="cell" style="left:808.5px;top:704px;width:94.5px;height:66px"></div>
<div class="num" style="left:808px;top:728px;width:94.5px">AED 0.00</div>
<div class="cell" style="left:903px;top:704px;width:94.5px;height:66px"></div>
<div class="num" style="left:902.5px;top:728px;width:94.5px">AED 0.00</div>
<div class="cell" style="left:997.5px;top:704px;width:94.5px;height:66px"></div>
<div class="num" style="left:997px;top:728px;width:94.5px">AED 0.00</div>
<div class="cell" style="left:1092px;top:704px;width:94.5px;height:66px"></div>
<div class="num" style="left:1091.5px;top:728px;width:94.5px">AED 0.00</div>
<div class="cell" style="left:1186.5px;top:704px;width:94.5px;height:66px"></div>
<div class="num" style="left:1186px;top:728px;width:94.5px">AED 0.00</div>
<div class="cell" style="left:1281px;top:704px;width:94.5px;height:66px"></div>
<div class="num" style="left:1280.5px;top:728px;width:94.5px">AED 0.00</div>
<div class="cell" style="left:1375.5px;top:704px;width:94.5px;height:66px"></div>
<div class="num" style="left:1375px;top:728px;width:94.5px">AED 0.00</div>
<div class="cell" style="left:1470px;top:704px;width:130px;height:66px;background:#364256;border:0"></div>
<div class="tot" style="left:1470px;top:726.8px;width:130px">AED 0.00</div>
<div class="aname" style="left:50.5px;top:715.4px;letter-spacing:0.36px;-webkit-text-stroke-width:.4px">Third-party APIs</div>
<div class="acode" style="left:50.5px;top:738.7px;letter-spacing:0.5px">3200</div>
<div class="pill" style="left:239px;top:715.5px;width:87px;height:41px;background:#302538;border:1px solid #8a3b3e"></div>
<svg class="abs" style="left:249px;top:731px" width="13" height="11" viewBox="0 0 24 20" fill="none" stroke="#f0807c" stroke-width="2.3" stroke-linecap="round" stroke-linejoin="round"><path d="M2 5l6.500 6.500 4.500-4.500L22 16M15.500 16H22V9.500"/></svg>
<div class="pt" style="left:266px;top:728.5px;-webkit-text-stroke-color:#ef8a85;color:#ef8a85">&#8722;1.0%</div>
<div class="abs" style="left:312px;top:731px;width:3.5px;height:11px;border-radius:2px;background:#84474f"></div>
<div class="cell" style="left:0px;top:770px;width:230.5px;height:66px"></div>
<div class="cell" style="left:230.5px;top:770px;width:105.5px;height:66px"></div>
<div class="cell" style="left:336px;top:770px;width:94.5px;height:66px"></div>
<div class="num" style="left:335.5px;top:794px;width:94.5px">AED 0.00</div>
<div class="cell" style="left:430.5px;top:770px;width:94.5px;height:66px"></div>
<div class="num" style="left:430px;top:794px;width:94.5px">AED 0.00</div>
<div class="cell" style="left:525px;top:770px;width:94.5px;height:66px"></div>
<div class="num" style="left:524.5px;top:794px;width:94.5px">AED 0.00</div>
<div class="cell" style="left:619.5px;top:770px;width:94.5px;height:66px;background:#232d4d;border-right:2px solid #3c60c4"></div>
<div class="num" style="left:619px;top:794px;width:94.5px">AED 0.00</div>
<div class="cell" style="left:714px;top:770px;width:94.5px;height:66px"></div>
<div class="num" style="left:713.5px;top:794px;width:94.5px">AED 0.00</div>
<div class="cell" style="left:808.5px;top:770px;width:94.5px;height:66px"></div>
<div class="num" style="left:808px;top:794px;width:94.5px">AED 0.00</div>
<div class="cell" style="left:903px;top:770px;width:94.5px;height:66px"></div>
<div class="num" style="left:902.5px;top:794px;width:94.5px">AED 0.00</div>
<div class="cell" style="left:997.5px;top:770px;width:94.5px;height:66px"></div>
<div class="num" style="left:997px;top:794px;width:94.5px">AED 0.00</div>
<div class="cell" style="left:1092px;top:770px;width:94.5px;height:66px"></div>
<div class="num" style="left:1091.5px;top:794px;width:94.5px">AED 0.00</div>
<div class="cell" style="left:1186.5px;top:770px;width:94.5px;height:66px"></div>
<div class="num" style="left:1186px;top:794px;width:94.5px">AED 0.00</div>
<div class="cell" style="left:1281px;top:770px;width:94.5px;height:66px"></div>
<div class="num" style="left:1280.5px;top:794px;width:94.5px">AED 0.00</div>
<div class="cell" style="left:1375.5px;top:770px;width:94.5px;height:66px"></div>
<div class="num" style="left:1375px;top:794px;width:94.5px">AED 0.00</div>
<div class="cell" style="left:1470px;top:770px;width:130px;height:66px;background:#364256;border:0"></div>
<div class="tot" style="left:1470px;top:792.8px;width:130px">AED 0.00</div>
<div class="aname" style="left:50.5px;top:781.4px;letter-spacing:0.08px;-webkit-text-stroke-width:.4px">Payment Processing</div>
<div class="acode" style="left:50.5px;top:804.7px;letter-spacing:0.5px">3300</div>
<div class="pill" style="left:239px;top:781.5px;width:87px;height:41px;background:#302538;border:1px solid #8a3b3e"></div>
<svg class="abs" style="left:249px;top:797px" width="13" height="11" viewBox="0 0 24 20" fill="none" stroke="#f0807c" stroke-width="2.3" stroke-linecap="round" stroke-linejoin="round"><path d="M2 5l6.500 6.500 4.500-4.500L22 16M15.500 16H22V9.500"/></svg>
<div class="pt" style="left:266px;top:794.5px;-webkit-text-stroke-color:#ef8a85;color:#ef8a85">&#8722;1.0%</div>
<div class="abs" style="left:312px;top:797px;width:3.5px;height:11px;border-radius:2px;background:#84474f"></div>
<div class="abs" style="left:1598px;top:141px;width:2px;height:668px;background:#364256"></div>
<div class="fab"></div>
<svg class="abs" style="left:1540px;top:756.200px" width="22" height="22" viewBox="0 0 24 24" fill="none" stroke="#fff" stroke-width="2.2" stroke-linecap="round" stroke-linejoin="round"><path d="M3 12h3.500l3-9 5 18 3-9H21"/></svg>
</div></body></html>
